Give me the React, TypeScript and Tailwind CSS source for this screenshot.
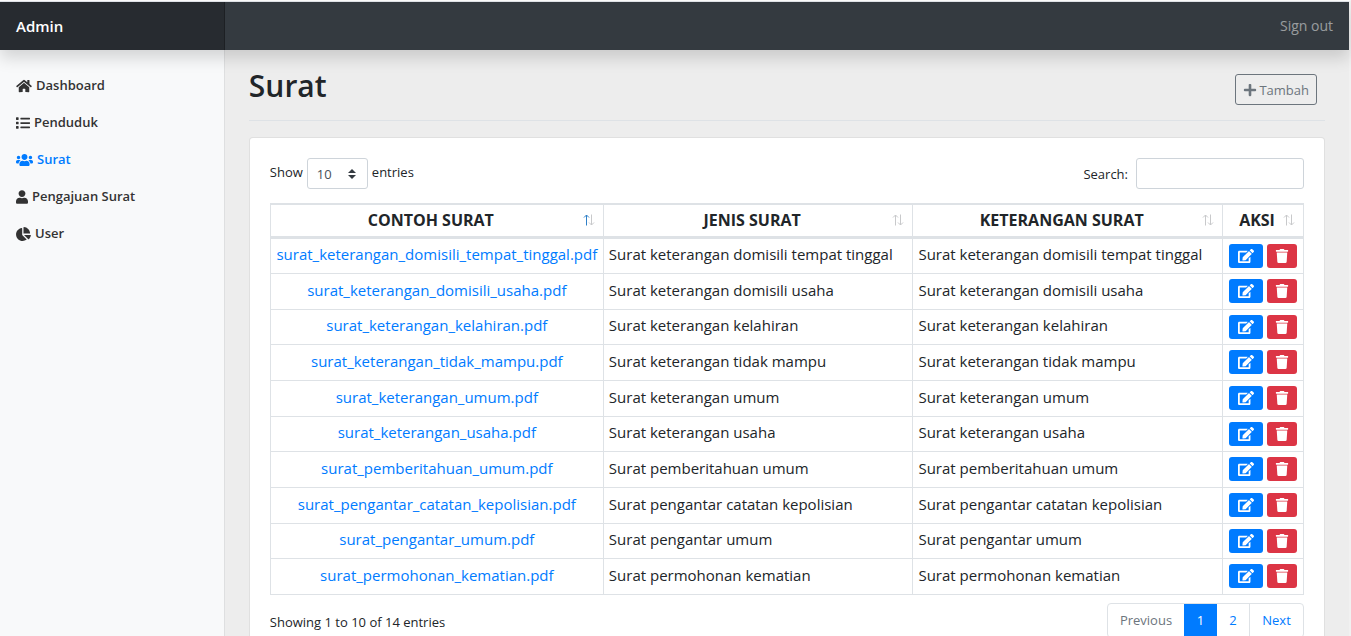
import type { ReactNode } from "react";
import {
  FaChartPie,
  FaEdit,
  FaHome,
  FaList,
  FaPlus,
  FaTrash,
  FaUser,
  FaUsers,
} from "react-icons/fa";

const letters = [
  ["surat_keterangan_domisili_tempat_tinggal.pdf", "Surat keterangan domisili tempat tinggal"],
  ["surat_keterangan_domisili_usaha.pdf", "Surat keterangan domisili usaha"],
  ["surat_keterangan_kelahiran.pdf", "Surat keterangan kelahiran"],
  ["surat_keterangan_tidak_mampu.pdf", "Surat keterangan tidak mampu"],
  ["surat_keterangan_umum.pdf", "Surat keterangan umum"],
  ["surat_keterangan_usaha.pdf", "Surat keterangan usaha"],
  ["surat_pemberitahuan_umum.pdf", "Surat pemberitahuan umum"],
  ["surat_pengantar_catatan_kepolisian.pdf", "Surat pengantar catatan kepolisian"],
  ["surat_pengantar_umum.pdf", "Surat pengantar umum"],
  ["surat_permohonan_kematian.pdf", "Surat permohonan kematian"],
];

function SortArrows({ active = false }: { active?: boolean }) {
  return (
    <svg viewBox="0 0 12 12" className="h-3 w-3 shrink-0" fill="none" strokeWidth="1" aria-hidden="true">
      <path d="M3.5 11.5V1M1 3.5L3.5 1L6 3.5" className={active ? "stroke-[#2f80c8]" : "stroke-[#c8c9cb]"} />
      <path d="M8.5 .5V11M6 8.5L8.5 11L11 8.5" className="stroke-[#c8c9cb]" />
    </svg>
  );
}

function NavItem({ icon, label, active = false }: { icon: ReactNode; label: string; active?: boolean }) {
  return (
    <li>
      <a
        href="#"
        className={`flex items-center gap-1 px-4 py-2 text-[13px] leading-[21px] font-semibold ${active ? "text-[#007bff]" : "text-[#333]"}`}
      >
        {icon}
        {label}
      </a>
    </li>
  );
}

function HeadCell({ label, active = false }: { label: string; active?: boolean }) {
  return (
    <th scope="col" className="border border-t-2 border-b-3 border-[#dee2e6] px-2 py-0 text-base font-bold">
      <div className="flex items-center">
        <span className="grow text-center">{label}</span>
        <SortArrows active={active} />
      </div>
    </th>
  );
}

export default function App() {
  return (
    <div className="flex min-h-screen flex-col border-t border-r-2 border-t-white border-r-[#f1f1f1] bg-[#ededed] font-['Open_Sans','Noto_Sans',sans-serif] text-[15px] leading-6 text-[#212529]">
      <header className="relative z-10 flex h-[49px] items-stretch border-t border-[#dee1e6] bg-[#343a40] shadow-[0_8px_16px_rgba(0,0,0,0.15)]">
        <a
          href="#"
          className="flex w-1/6 items-center bg-black/25 px-4 text-[15px] font-semibold text-white shadow-[inset_-1px_0_0_rgba(0,0,0,0.25)]"
        >
          Admin
        </a>
        <a href="#" className="ml-auto flex items-center px-4 text-sm text-white/50">
          Sign out
        </a>
      </header>

      <div className="flex grow">
        <nav className="w-1/6 shrink-0 bg-[#f8f9fa] pt-[17px] shadow-[inset_-1px_0_0_rgba(0,0,0,0.1)]">
          <ul>
            <NavItem icon={<FaHome className="h-3.5 w-4" />} label="Dashboard" />
            <NavItem icon={<FaList className="size-3.5" />} label="Penduduk" />
            <NavItem icon={<FaUsers className="h-3.5 w-[17px]" />} label="Surat" active />
            <NavItem icon={<FaUser className="h-3.5 w-3" />} label="Pengajuan Surat" />
            <NavItem icon={<FaChartPie className="h-3.5 w-[15px]" />} label="User" />
          </ul>
        </nav>

        <main className="min-w-0 grow px-6 pt-4 pb-6">
          <div className="mb-4 flex items-end justify-between border-b border-[#dee2e6] pr-2 pb-[15px]">
            <h1 className="text-[30px] leading-[39px] font-semibold">Surat</h1>
            <button
              type="button"
              className="flex h-[31px] items-center gap-0.5 rounded-[3px] border border-[#6c757d] px-[7px] text-[13px] text-[#6c757d]"
            >
              <FaPlus className="size-3.5" />
              Tambah
            </button>
          </div>

          <section className="rounded border border-black/12 bg-white p-5">
            <div className="mb-3.5 flex items-center justify-between text-[13px]">
              <div className="flex items-center gap-1">
                <label htmlFor="entries" className="pb-[3px]">Show</label>
                <span className="relative flex items-center">
                  <select
                    id="entries"
                    defaultValue="10"
                    className="h-[31px] w-[61px] appearance-none rounded-[3px] border border-[#ced4da] bg-white pl-[9px] text-[13px] text-[#495057]"
                  >
                    <option>10</option>
                    <option>25</option>
                    <option>50</option>
                    <option>100</option>
                  </select>
                  <svg viewBox="0 0 8 10" className="pointer-events-none absolute right-3 h-2.5 w-2" fill="#343a40" aria-hidden="true">
                    <path d="M4 0L0 4H8ZM4 10L0 6H8Z" />
                  </svg>
                </span>
                <span className="pb-[3px]">entries</span>
              </div>
              <div className="flex items-center gap-2">
                <label htmlFor="search">Search:</label>
                <input id="search" type="search" className="h-[31px] w-42 rounded-[3px] border border-[#ced4da] bg-white px-2" />
              </div>
            </div>

            <table className="w-full table-fixed border-collapse">
              <colgroup>
                <col className="w-[333px]" />
                <col />
                <col />
                <col className="w-[81px]" />
              </colgroup>
              <thead>
                <tr className="h-[33px]">
                  <HeadCell label="CONTOH SURAT" active />
                  <HeadCell label="JENIS SURAT" />
                  <HeadCell label="KETERANGAN SURAT" />
                  <HeadCell label="AKSI" />
                </tr>
              </thead>
              <tbody>
                {letters.map(([file, title]) => (
                  <tr key={file} className="h-9 nth-[3n]:h-[35px]">
                    <td className="border border-[#dee2e6] px-0 pt-0 pb-[3px] text-center whitespace-nowrap">
                      <a href="#" className="text-[#007bff]">{file}</a>
                    </td>
                    <td className="border border-[#dee2e6] px-[5px] pt-0 pb-[3px] whitespace-nowrap">{title}</td>
                    <td className="border border-[#dee2e6] px-[5px] pt-0 pb-[3px] whitespace-nowrap">{title}</td>
                    <td className="border border-[#dee2e6] p-0">
                      <div className="flex justify-center gap-1">
                        <button type="button" aria-label="Edit" className="flex h-6 w-[34px] items-center justify-center rounded-[3px] bg-[#007bff] text-white">
                          <FaEdit className="h-4 w-4" />
                        </button>
                        <button type="button" aria-label="Hapus" className="flex h-6 w-[30px] items-center justify-center rounded-[3px] bg-[#dc3545] text-white">
                          <FaTrash className="h-3.5 w-3.5" />
                        </button>
                      </div>
                    </td>
                  </tr>
                ))}
              </tbody>
            </table>

            <div className="mt-2 flex items-center justify-between text-[13px]">
              <p className="pt-1">Showing 1 to 10 of 14 entries</p>
              <nav aria-label="Halaman" className="flex h-[35px] items-stretch overflow-hidden rounded border border-[#dee2e6]">
                <a href="#" className="flex w-19 items-center justify-center text-[#6c757d]">Previous</a>
                <a href="#" aria-current="page" className="flex w-[33px] items-center justify-center bg-[#007bff] text-white">1</a>
                <a href="#" className="flex w-[33px] items-center justify-center border-r border-[#dee2e6] text-[#007bff]">2</a>
                <a href="#" className="flex w-[53px] items-center justify-center text-[#007bff]">Next</a>
              </nav>
            </div>
          </section>
        </main>
      </div>
    </div>
  );
}
